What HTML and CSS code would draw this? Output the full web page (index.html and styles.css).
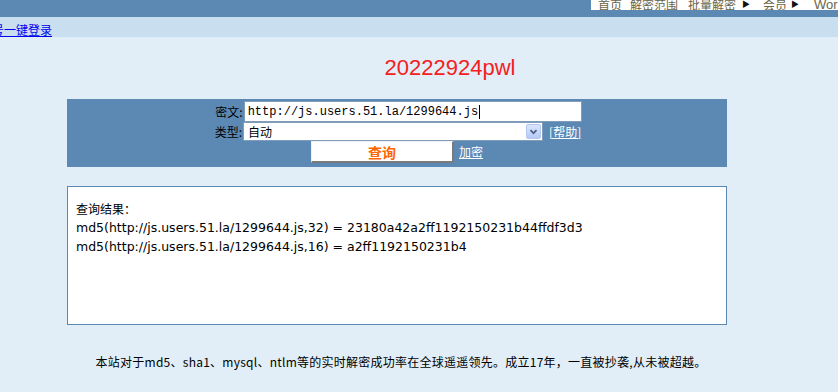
FILE: index.html
```html
<!DOCTYPE html>
<html lang="zh-CN">
<head>
<meta charset="utf-8">
<title>20222924pwl</title>
<link rel="stylesheet" href="styles.css">
</head>
<body>
<div class="topbar">
  <div class="menu">
    <span class="mi m1">首页</span>
    <span class="mi m2">解密范围</span>
    <span class="mi m3">批量解密</span><span class="tri t1">▶</span>
    <span class="mi m4">会员</span><span class="tri t2">▶</span>
    <span class="mi m5">Work</span>
  </div>
</div>
<div class="band"><a class="login" href="#"><span class="cut">号</span>一键登录</a></div>
<h1 class="title">20222924pwl</h1>
<div class="form">
  <div class="row">
    <span class="label">密文:</span>
    <div class="input"><span class="val">http://js.users.51.la/1299644.js</span><span class="caret"></span></div>
  </div>
  <div class="row">
    <span class="label">类型:</span>
    <div class="select"><span class="opt">自动</span><span class="arrow"><svg width="15" height="15" viewBox="0 0 15 15"><path d="M4 6 L7.5 9.5 L11 6" fill="none" stroke="#4d6185" stroke-width="2"/></svg></span></div>
    <a class="help" href="#">[帮助]</a>
  </div>
  <div class="row">
    <button class="btn">查询</button>
    <a class="enc" href="#">加密</a>
  </div>
</div>
<div class="result">
  <div class="rtitle">查询结果：</div>
  <div class="rline">md5(http://js.users.51.la/1299644.js,32) = 23180a42a2ff1192150231b44ffdf3d3</div>
  <div class="rline">md5(http://js.users.51.la/1299644.js,16) = a2ff1192150231b4</div>
</div>
<p class="footer">本站对于md5、sha1、mysql、ntlm等的实时解密成功率在全球遥遥领先。成立17年，一直被抄袭,从未被超越。</p>
</body>
</html>
```
FILE: styles.css
```css
html, body {
  margin: 0;
  padding: 0;
}
body {
  background: #e1eef7;
  font-family: "Noto Sans CJK SC", "Liberation Sans", sans-serif;
  font-size: 12px;
  color: #000;
  overflow: hidden;
}
.topbar {
  height: 17px;
  background: #5c89b4;
}
.menu {
  margin-left: 591px;
  height: 10px;
  background: #fff;
  overflow: hidden;
  display: flex;
  align-items: flex-end;
  white-space: nowrap;
  font-size: 12px;
  color: #6b6448;
}
.menu .mi {
  line-height: 12px;
  margin-bottom: -1px;
}
.menu .tri {
  font-size: 8px;
  line-height: 12px;
  color: #111;
}
.m1 { margin-left: 7px; }
.m2 { margin-left: 8px; }
.m3 { margin-left: 10px; }
.t1 { margin-left: 6px; }
.m4 { margin-left: 13px; }
.t2 { margin-left: 4px; }
.m5 { margin-left: 15px; font-family: "Liberation Sans", sans-serif; font-size: 13px; }
.band {
  height: 20px;
  background: #c9dff0;
  overflow: hidden;
}
.login {
  display: inline-block;
  margin-left: -8px;
  margin-top: 6px;
  line-height: 14px;
  color: #0000ee;
  text-decoration: underline;
}
.title {
  margin: 0;
  padding: 20px 0 0 62px;
  height: 42px;
  box-sizing: border-box;
  text-align: center;
  font-family: "Liberation Sans", Arial, sans-serif;
  font-weight: normal;
  font-size: 22px;
  line-height: 22px;
  color: #f52020;
}
.form {
  margin: 20px 0 0 67px;
  width: 660px;
  height: 68px;
  box-sizing: border-box;
  background: #5c89b4;
  padding-top: 2px;
  display: flex;
  flex-direction: column;
  align-items: center;
}
.row {
  display: flex;
  align-items: center;
}
.label {
  color: #000;
  font-size: 12px;
  line-height: 18px;
  margin-right: 1px;
}
.input {
  width: 338px;
  height: 21px;
  box-sizing: border-box;
  background: #fff;
  border: 1px solid #7f9db9;
  display: flex;
  align-items: center;
  padding-left: 3px;
  font-family: "Liberation Mono", monospace;
  font-size: 12px;
}
.caret {
  width: 1px;
  height: 14px;
  background: #000;
  margin-left: 1px;
}
.row:nth-child(1) {
  margin-left: 3px;
}
.select {
  width: 300px;
  height: 19px;
  box-sizing: border-box;
  background: #fff;
  border: 1px solid #7f9db9;
  display: flex;
  align-items: center;
  justify-content: space-between;
  padding-left: 4px;
  font-size: 12px;
}
.arrow {
  width: 15px;
  height: 15px;
  margin-right: 1px;
  background: linear-gradient(#dbe6fd, #b5c8f6);
  border: 1px solid #b4c6ef;
  border-radius: 2px;
  box-sizing: border-box;
  display: flex;
  align-items: center;
  justify-content: center;
}
.arrow svg {
  width: 13px;
  height: 13px;
}
.help {
  margin-left: 6px;
  color: #fff;
  text-decoration: underline;
  line-height: 16px;
}
.row:nth-child(2) {
  margin-left: 2px;
}
.btn {
  width: 143px;
  height: 22px;
  background: #fff;
  border: none;
  border-right: 2px solid #7a7a7a;
  border-bottom: 2px solid #7a7a7a;
  border-top: 1px solid #f0f0f0;
  border-left: 1px solid #f0f0f0;
  font-family: "Noto Sans CJK SC", sans-serif;
  font-size: 14px;
  font-weight: bold;
  color: #ff6600;
  padding: 0;
  line-height: 18px;
}
.enc {
  margin-left: 5px;
  color: #fff;
  text-decoration: underline;
  line-height: 16px;
}
.result {
  margin: 19px 0 0 67px;
  width: 660px;
  height: 139px;
  box-sizing: border-box;
  background: #fff;
  border: 1px solid #5c89b4;
  padding: 12px 0 0 8px;
}
.rtitle {
  font-size: 12px;
  line-height: 19px;
}
.rline {
  font-family: "DejaVu Sans", Verdana, sans-serif;
  font-size: 12.5px;
  line-height: 19px;
}
.footer {
  margin: 29px 0 0 0;
  text-align: center;
  font-size: 12px;
  line-height: 16px;
  letter-spacing: 0.25px;
  width: 802px;
}
```
